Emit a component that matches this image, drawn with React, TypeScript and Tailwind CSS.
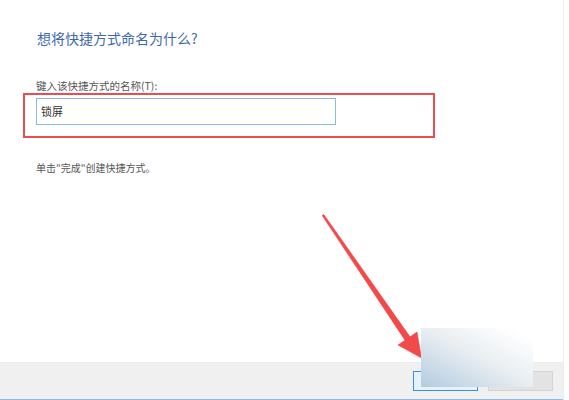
import React from 'react';

const font = { fontFamily: '"Noto Sans CJK SC", "Noto Sans", sans-serif' };

const App: React.FC = () => {
  return (
    <div className="relative w-[569px] h-[400px] overflow-hidden bg-white" style={font}>
      <div className="flex flex-col w-[564px] h-full border-r border-[#e6eff8]">
        {/* wizard body */}
        <div className="flex-1 flex flex-col pt-[28px]">
          <h2 className="ml-[37px] text-[14px] leading-[20px] text-[#4069ad]">想将快捷方式命名为什么?</h2>
          <label className="ml-[36px] mt-[31px] text-[10.5px] leading-[14px] text-[#555]">键入该快捷方式的名称(T):</label>
          <div className="ml-[23px] w-[412px] h-[45px] border-2 border-[#ea4c4f] pt-[3px] pl-[11px]">
            <div className="w-[300px] h-[27px] border border-[#86b8e8] bg-white flex items-center px-[4px] text-[11px] text-[#333]">
              锁屏
            </div>
          </div>
          <p className="ml-[36px] mt-[23px] text-[10px] leading-[14px] text-[#555]">单击"完成"创建快捷方式。</p>
        </div>

        {/* footer */}
        <div className="h-[38px] bg-[#f0f0f0] border-t border-[#ebebeb] border-b border-b-[#8fbde8] flex items-center justify-end gap-[10px] pr-[10px]">
          <button className="w-[65px] h-[20px] border border-[#3c8fdc] bg-[#e5f1fb]" />
          <button className="w-[65px] h-[20px] border border-[#d4d4d4] bg-[#e3e3e3]" />
        </div>
      </div>

      {/* annotation arrow */}
      <svg className="absolute left-0 top-0" width="569" height="400" viewBox="0 0 569 400">
        <polygon
          points="323.8,214.4 410,336.8 417,332 421.5,358 398,345 405,340.2 322.2,215.6"
          fill="#f2494b"
          stroke="#f2494b"
          strokeWidth="0.6"
          strokeLinejoin="round"
        />
      </svg>

      {/* blurred cover over the button */}
      <div className="absolute left-[421px] top-[328px] w-[112px] h-[59px] bg-linear-to-bl from-white from-10% via-[#e8edf1] via-50% to-[#b3cbe0]" />
    </div>
  );
};

export default App;
